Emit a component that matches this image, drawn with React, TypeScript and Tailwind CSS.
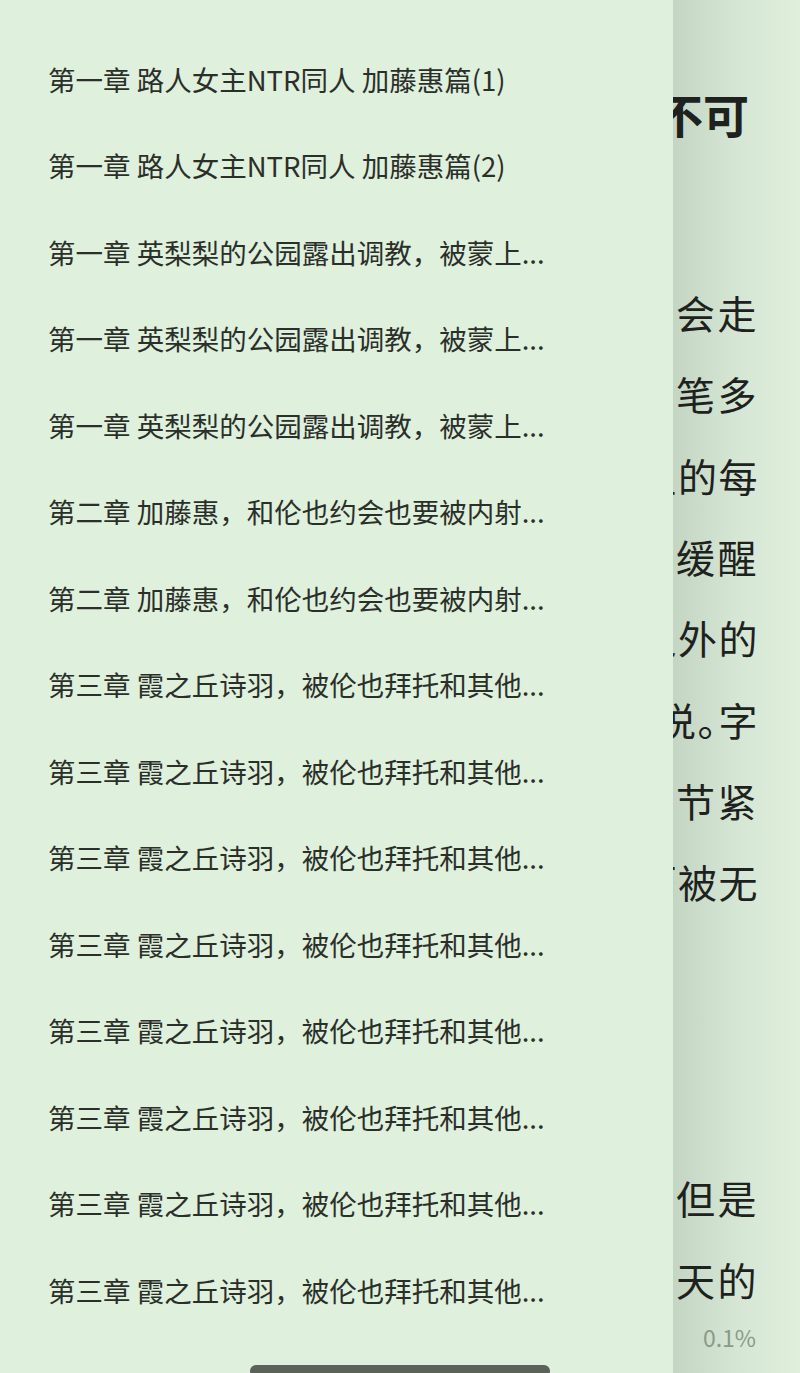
import React from "react";

const chapters = [
  "第一章 路人女主NTR同人 加藤惠篇(1)",
  "第一章 路人女主NTR同人 加藤惠篇(2)",
  "第一章 英梨梨的公园露出调教，被蒙上...",
  "第一章 英梨梨的公园露出调教，被蒙上...",
  "第一章 英梨梨的公园露出调教，被蒙上...",
  "第二章 加藤惠，和伦也约会也要被内射...",
  "第二章 加藤惠，和伦也约会也要被内射...",
  "第三章 霞之丘诗羽，被伦也拜托和其他...",
  "第三章 霞之丘诗羽，被伦也拜托和其他...",
  "第三章 霞之丘诗羽，被伦也拜托和其他...",
  "第三章 霞之丘诗羽，被伦也拜托和其他...",
  "第三章 霞之丘诗羽，被伦也拜托和其他...",
  "第三章 霞之丘诗羽，被伦也拜托和其他...",
  "第三章 霞之丘诗羽，被伦也拜托和其他...",
  "第三章 霞之丘诗羽，被伦也拜托和其他...",
];

const bodyLines = [
  { text: "这是一个平凡的故事，命运终究会走", loose: true },
  { text: "向它该去的地方，留下的只有一笔多", loose: true },
  { text: "余的回忆，在那些被遗忘的日子里的每", loose: false },
  { text: "一个清晨，少年都会从梦中缓醒", loose: true },
  { text: "来，望着窗外那片意料之外的", loose: false },
  { text: "天空，想起那本未完的小说。字", loose: false },
  { text: "里行间的故事情节紧", loose: true },
  { text: "紧相扣，让人沉浸其中而被无", loose: false },
];

const tailLines = ["他一直相信着，但是", "那是很久以前某一天的"];

const font = "font-['Noto_Sans_CJK_SC','Noto_Sans',sans-serif]";

function ChapterRow({ title }: { title: string }) {
  return (
    <div className="flex h-[86.5px] items-center pl-12">
      <span className="whitespace-nowrap text-[27.5px] leading-none text-[#2b2f2a]">
        {title}
      </span>
    </div>
  );
}

export default function App() {
  return (
    <div className={`relative flex h-[1373px] w-[800px] overflow-hidden bg-[#dfefdc] ${font}`}>
      {/* Chapter drawer */}
      <div className="w-[673px] shrink-0 bg-[#dff0dd] pt-9">
        {chapters.map((c, i) => (
          <ChapterRow key={i} title={c} />
        ))}
      </div>

      {/* Reader page behind the drawer, with the drawer shadow */}
      <div className="flex min-w-0 flex-1 flex-col overflow-hidden bg-gradient-to-r from-[#c5d5c3] via-[#d6e6d4] to-[#dfefdc] text-[#1e221e]">
        <div className="mt-[83px] flex h-[60px] items-center justify-end whitespace-nowrap pr-[51px] text-[46px] font-bold leading-none">
          路人女主的养成方法不可
        </div>

        <div className="mt-[129px] flex flex-col">
          {bodyLines.map((l, i) => (
            <div
              key={i}
              className={`flex h-[81.3px] items-center justify-end whitespace-nowrap pr-[41px] text-[39px] leading-none ${
                l.loose ? "tracking-[2.5px]" : "tracking-[1.5px]"
              }`}
            >
              {i === 5 ? (
                <>
                  天空，想起那本未完的小说
                  <span className="[font-feature-settings:'halt']">。</span>字
                </>
              ) : (
                l.text
              )}
            </div>
          ))}
        </div>

        <div className="mt-[234px] flex flex-col">
          {tailLines.map((l, i) => (
            <div
              key={i}
              className="flex h-[82px] items-center justify-end whitespace-nowrap pr-[41px] text-[39px] leading-none tracking-[2.5px]"
            >
              {l}
            </div>
          ))}
        </div>

        <div className="mt-[6px] flex justify-end pr-[44px] text-[23px] leading-none text-[#8b998a]">
          0.1%
        </div>
      </div>

      {/* Gesture bar */}
      <div className="absolute left-[250px] top-[1365px] h-[12px] w-[300px] rounded-full bg-[#5b6359]" />
    </div>
  );
}
